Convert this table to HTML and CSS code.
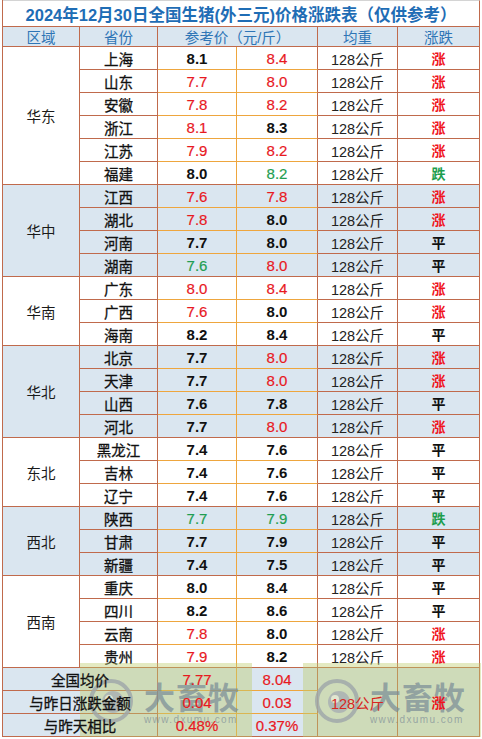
FILE: index.html
```html
<!DOCTYPE html>
<html lang="zh-CN">
<head>
<meta charset="utf-8">
<title>2024年12月30日全国生猪价格涨跌表</title>
<link rel="stylesheet" href="styles.css">
</head>
<body>
<div class="sheet">
  <div class="cell title">2024年12月30日全国生猪(外三元)价格涨跌表（仅供参考）</div>

  <div class="cell head">区域</div>
  <div class="cell head">省份</div>
  <div class="cell head span2">参考价（元/斤）</div>
  <div class="cell head">均重</div>
  <div class="cell head">涨跌</div>

  <!-- 华东 -->
  <div class="cell region rows6">华东</div>
  <div class="cell prov">上海</div><div class="cell p1 k">8.1</div><div class="cell p2 r">8.4</div><div class="cell wt">128公斤</div><div class="cell tr up">涨</div>
  <div class="cell prov">山东</div><div class="cell p1 r">7.7</div><div class="cell p2 r">8.0</div><div class="cell wt">128公斤</div><div class="cell tr up">涨</div>
  <div class="cell prov">安徽</div><div class="cell p1 r">7.8</div><div class="cell p2 r">8.2</div><div class="cell wt">128公斤</div><div class="cell tr up">涨</div>
  <div class="cell prov">浙江</div><div class="cell p1 r">8.1</div><div class="cell p2 k">8.3</div><div class="cell wt">128公斤</div><div class="cell tr up">涨</div>
  <div class="cell prov">江苏</div><div class="cell p1 r">7.9</div><div class="cell p2 r">8.2</div><div class="cell wt">128公斤</div><div class="cell tr up">涨</div>
  <div class="cell prov">福建</div><div class="cell p1 k end">8.0</div><div class="cell p2 g end">8.2</div><div class="cell wt">128公斤</div><div class="cell tr down">跌</div>

  <!-- 华中 -->
  <div class="cell region rows4 b">华中</div>
  <div class="cell prov b">江西</div><div class="cell p1 r b">7.6</div><div class="cell p2 r b">7.8</div><div class="cell wt b">128公斤</div><div class="cell tr up b">涨</div>
  <div class="cell prov b">湖北</div><div class="cell p1 r b">7.8</div><div class="cell p2 k b">8.0</div><div class="cell wt b">128公斤</div><div class="cell tr up b">涨</div>
  <div class="cell prov b">河南</div><div class="cell p1 k b">7.7</div><div class="cell p2 k b">8.0</div><div class="cell wt b">128公斤</div><div class="cell tr flat b">平</div>
  <div class="cell prov b">湖南</div><div class="cell p1 g b end">7.6</div><div class="cell p2 r b end">8.0</div><div class="cell wt b">128公斤</div><div class="cell tr flat b">平</div>

  <!-- 华南 -->
  <div class="cell region rows3">华南</div>
  <div class="cell prov">广东</div><div class="cell p1 r">8.0</div><div class="cell p2 r">8.4</div><div class="cell wt">128公斤</div><div class="cell tr up">涨</div>
  <div class="cell prov">广西</div><div class="cell p1 r">7.6</div><div class="cell p2 k">8.0</div><div class="cell wt">128公斤</div><div class="cell tr up">涨</div>
  <div class="cell prov">海南</div><div class="cell p1 k end">8.2</div><div class="cell p2 k end">8.4</div><div class="cell wt">128公斤</div><div class="cell tr flat">平</div>

  <!-- 华北 -->
  <div class="cell region rows4 b">华北</div>
  <div class="cell prov b">北京</div><div class="cell p1 k b">7.7</div><div class="cell p2 r b">8.0</div><div class="cell wt b">128公斤</div><div class="cell tr up b">涨</div>
  <div class="cell prov b">天津</div><div class="cell p1 k b">7.7</div><div class="cell p2 r b">8.0</div><div class="cell wt b">128公斤</div><div class="cell tr up b">涨</div>
  <div class="cell prov b">山西</div><div class="cell p1 k b">7.6</div><div class="cell p2 k b">7.8</div><div class="cell wt b">128公斤</div><div class="cell tr flat b">平</div>
  <div class="cell prov b">河北</div><div class="cell p1 k b end">7.7</div><div class="cell p2 r b end">8.0</div><div class="cell wt b">128公斤</div><div class="cell tr up b">涨</div>

  <!-- 东北 -->
  <div class="cell region rows3">东北</div>
  <div class="cell prov">黑龙江</div><div class="cell p1 k">7.4</div><div class="cell p2 k">7.6</div><div class="cell wt">128公斤</div><div class="cell tr flat">平</div>
  <div class="cell prov">吉林</div><div class="cell p1 k">7.4</div><div class="cell p2 k">7.6</div><div class="cell wt">128公斤</div><div class="cell tr flat">平</div>
  <div class="cell prov">辽宁</div><div class="cell p1 k end">7.4</div><div class="cell p2 k end">7.6</div><div class="cell wt">128公斤</div><div class="cell tr flat">平</div>

  <!-- 西北 -->
  <div class="cell region rows3 b">西北</div>
  <div class="cell prov b">陕西</div><div class="cell p1 g b">7.7</div><div class="cell p2 g b">7.9</div><div class="cell wt b">128公斤</div><div class="cell tr down b">跌</div>
  <div class="cell prov b">甘肃</div><div class="cell p1 k b">7.7</div><div class="cell p2 k b">7.9</div><div class="cell wt b">128公斤</div><div class="cell tr flat b">平</div>
  <div class="cell prov b">新疆</div><div class="cell p1 k b end">7.4</div><div class="cell p2 k b end">7.5</div><div class="cell wt b">128公斤</div><div class="cell tr flat b">平</div>

  <!-- 西南 -->
  <div class="cell region rows4">西南</div>
  <div class="cell prov">重庆</div><div class="cell p1 k">8.0</div><div class="cell p2 k">8.4</div><div class="cell wt">128公斤</div><div class="cell tr flat">平</div>
  <div class="cell prov">四川</div><div class="cell p1 k">8.2</div><div class="cell p2 k">8.6</div><div class="cell wt">128公斤</div><div class="cell tr flat">平</div>
  <div class="cell prov">云南</div><div class="cell p1 r">7.8</div><div class="cell p2 k">8.0</div><div class="cell wt">128公斤</div><div class="cell tr up">涨</div>
  <div class="cell prov">贵州</div><div class="cell p1 r end">7.9</div><div class="cell p2 k end">8.2</div><div class="cell wt">128公斤</div><div class="cell tr up">涨</div>

  <!-- 汇总 -->
  <div class="cell label span2 b"><span class="over">全国均价</span></div><div class="cell p1 r b"><span class="over">7.77</span></div><div class="cell p2 r b"><span class="over">8.04</span></div>
  <div class="cell wt sum rows3 b"><span class="over">128公斤</span></div><div class="cell tr up rows3 b"><span class="over">涨</span></div>
  <div class="cell label span2 b"><span class="over">与昨日涨跌金额</span></div><div class="cell p1 r b"><span class="over">0.04</span></div><div class="cell p2 r b"><span class="over">0.03</span></div>
  <div class="cell label span2 b"><span class="over">与昨天相比</span></div><div class="cell p1 r b end"><span class="over">0.48%</span></div><div class="cell p2 r b end"><span class="over">0.37%</span></div>

  <div class="mark mark-a">
    <svg class="mark-logo" viewBox="0 0 46 46" aria-hidden="true">
      <circle cx="23" cy="23" r="20" fill="none" stroke="#9ea6aa" stroke-width="4"/>
      <circle cx="25" cy="24" r="11" fill="#a8afb3"/>
      <circle cx="21" cy="21" r="4" fill="#e6e9d6"/>
    </svg>
    <div class="mark-text">
      <span class="mark-name">大畜牧</span>
      <span class="mark-url">www.dxumu.com</span>
    </div>
  </div>
  <div class="mark mark-b">
    <svg class="mark-logo" viewBox="0 0 46 46" aria-hidden="true">
      <circle cx="23" cy="23" r="20" fill="none" stroke="#9ea6aa" stroke-width="4"/>
      <circle cx="25" cy="24" r="11" fill="#a8afb3"/>
      <circle cx="21" cy="21" r="4" fill="#e6e9d6"/>
    </svg>
    <div class="mark-text">
      <span class="mark-name">大畜牧</span>
      <span class="mark-url">www.dxumu.com</span>
    </div>
  </div>
</div>
</body>
</html>
```

FILE: styles.css
```css
html, body {
  margin: 0;
  padding: 0;
  background: #ffffff;
}

body {
  font-family: "Liberation Sans", "Noto Sans CJK SC", sans-serif;
  color: #1a1a1a;
}

.sheet {
  position: relative;
  margin-left: 2px;
  width: 478px;
  border-left: 1px solid #c06a4c;
  display: grid;
  grid-template-columns: 77px 78px 79px 81px 80px 82px;
  grid-template-rows: 27px 20px repeat(30, 23px);
  box-sizing: border-box;
}

.cell {
  box-sizing: border-box;
  border-right: 1px solid #c06a4c;
  border-bottom: 1px solid #c06a4c;
  display: flex;
  align-items: center;
  justify-content: center;
  white-space: nowrap;
  overflow: hidden;
  background: #ffffff;
}

.b { background: #dae6f0; }

.over {
  position: relative;
  z-index: 2;
}

.title {
  grid-column: 1 / -1;
  border-top: 1px solid #d4d4d4;
  font-size: 16.5px;
  font-weight: 700;
  color: #1f6db5;
  padding-top: 1px;
}

.head {
  background: #dae6f0;
  color: #2e75b6;
  font-size: 14.5px;
}

.span2 { grid-column: span 2; }
.rows3 { grid-row: span 3; }
.rows4 { grid-row: span 4; }
.rows6 { grid-row: span 6; }

.region {
  font-size: 14.5px;
  color: #1a1a1a;
}

.prov,
.label {
  font-size: 14.5px;
  color: #111111;
  -webkit-text-stroke: 0.3px #111111;
}

.p1, .p2 {
  font-size: 15px;
  border-bottom-color: #eea63e;
}
.p1 { border-right-color: #eea63e; }
.p1.end, .p2.end { border-bottom-color: #c06a4c; }

.k { color: #111111; font-weight: 700; }
.r { color: #e8191f; -webkit-text-stroke: 0.2px #e8191f; }
.g { color: #1f9e52; -webkit-text-stroke: 0.2px #1f9e52; }

.wt {
  font-size: 14.5px;
  color: #222222;
}
.wt.sum { color: #d8261f; }

.tr {
  font-size: 14px;
  font-weight: 700;
}
.up { color: #f0141c; }
.down { color: #1e9e4e; }
.flat { color: #111111; }

.mark {
  position: absolute;
  z-index: 1;
  top: 663px;
  height: 76px;
  background: rgba(190, 205, 110, 0.42);
  display: flex;
  align-items: center;
  gap: 10px;
  box-sizing: border-box;
}
.mark-a { left: 77px; width: 172px; padding-left: 8px; }
.mark-b { left: 300px; width: 178px; padding-left: 11px; }

.mark-logo {
  width: 46px;
  height: 46px;
  flex: none;
  opacity: 0.8;
}

.mark-text {
  display: flex;
  flex-direction: column;
  align-items: flex-start;
  line-height: 1;
  padding-top: 3px;
}
.mark-name {
  font-family: "Noto Sans CJK SC", sans-serif;
  font-size: 31px;
  font-weight: 700;
  color: rgba(120, 138, 150, 0.7);
  letter-spacing: 1px;
}
.mark-url {
  margin-top: 4px;
  font-size: 10px;
  letter-spacing: 1.4px;
  color: rgba(125, 140, 152, 0.7);
}
```
